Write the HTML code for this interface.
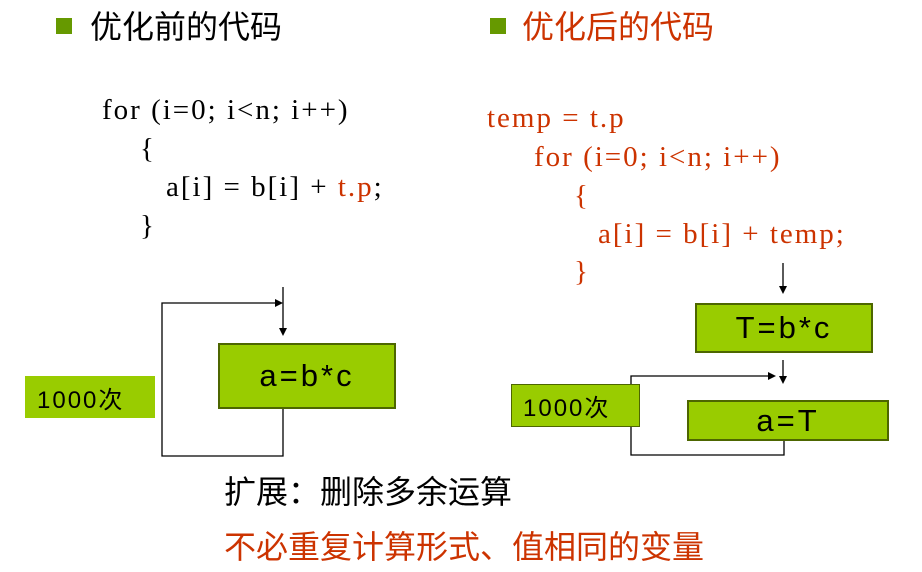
<!DOCTYPE html>
<html><head><meta charset="utf-8"><style>
body{margin:0;width:922px;height:572px;background:#fff;position:relative;overflow:hidden;font-family:"Liberation Sans","Noto Sans CJK SC",sans-serif}
.a{position:absolute;white-space:nowrap}
.sq{position:absolute;width:16px;height:16px;background:#669900}
.code{font-family:"Liberation Serif","Noto Serif CJK SC",serif;font-size:29px;line-height:30px;letter-spacing:2px}
.red{color:#cc3300}
.box{position:absolute;background:#99cc00;border:2px solid #4d6600;box-sizing:border-box;display:flex;align-items:center;justify-content:center;font-size:31px;letter-spacing:3px}
.lbl{position:absolute;background:#99cc00;font-size:24px;letter-spacing:2px;display:flex;align-items:center;padding-left:12px;box-sizing:border-box}
</style></head><body>
<div class="sq" style="left:56px;top:18px"></div>
<div class="a" style="left:90px;top:2px;font-size:32px">优化前的代码</div>
<div class="sq" style="left:490px;top:18px"></div>
<div class="a red" style="left:522px;top:2px;font-size:32px">优化后的代码</div>

<div class="a code" style="left:102px;top:95px">for (i=0; i&lt;n; i++)</div>
<div class="a code" style="left:140px;top:134px">{</div>
<div class="a code" style="left:166px;top:172px">a[i] = b[i] + <span class="red">t.p</span>;</div>
<div class="a code" style="left:140px;top:211px">}</div>

<div class="a code red" style="left:487px;top:103px">temp = t.p</div>
<div class="a code red" style="left:534px;top:142px">for (i=0; i&lt;n; i++)</div>
<div class="a code red" style="left:574px;top:181px">{</div>
<div class="a code red" style="left:598px;top:219px">a[i] = b[i] + temp;</div>
<div class="a code red" style="left:574px;top:257px">}</div>

<svg class="a" style="left:0;top:0" width="922" height="572">
<g stroke="#000" stroke-width="1.3" fill="none">
<polyline points="276,303 162,303 162,456 283,456 283,408"/>
<line x1="283" y1="287" x2="283" y2="328"/>
<polyline points="768,376 631,376 631,455 784,455 784,441"/>
<line x1="783" y1="263" x2="783" y2="286"/>
<line x1="783" y1="360" x2="783" y2="377"/>
</g>
<g fill="#000">
<polygon points="283,303 275,299 275,307"/>
<polygon points="283,336 279,328 287,328"/>
<polygon points="776,376 768,372 768,380"/>
<polygon points="783,294 779,286 787,286"/>
<polygon points="783,384 779,376 787,376"/>
</g>
</svg>

<div class="box" style="left:218px;top:343px;width:178px;height:66px">a=b*c</div>
<div class="lbl" style="left:25px;top:376px;width:130px;height:42px">1000次</div>
<div class="box" style="left:695px;top:303px;width:178px;height:50px">T=b*c</div>
<div class="box" style="left:511px;top:384px;width:129px;height:43px;justify-content:flex-start;padding-left:11px;font-size:24px;letter-spacing:2px;border-width:1px">1000次</div>
<div class="box" style="left:687px;top:400px;width:202px;height:41px">a=T</div>

<div class="a" style="left:224px;top:467px;font-size:32px">扩展：删除多余运算</div>
<div class="a red" style="left:224px;top:522px;font-size:32px">不必重复计算形式、值相同的变量</div>
</body></html>
